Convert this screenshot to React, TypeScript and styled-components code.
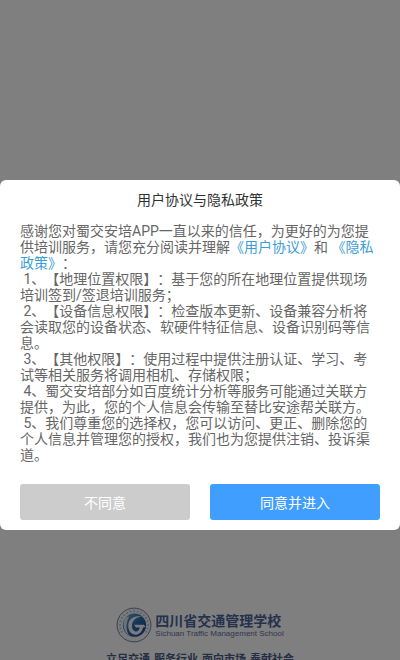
import React from "react";
import styled, { createGlobalStyle } from "styled-components";

const GlobalStyle = createGlobalStyle`
  * { box-sizing: border-box; }
  body {
    margin: 0;
    overflow: hidden;
    background: #fff;
    font-family: Roboto, "Noto Sans CJK SC", sans-serif;
    font-size: 14px;
    text-spacing-trim: space-all;
  }
`;

const Content = styled.main`
  min-height: calc(100vh - 53px);
`;

const Footer = styled.footer`
  display: flex;
  flex-direction: column;
  align-items: center;
  gap: 9px;
`;

const Brand = styled.div`
  display: flex;
  align-items: center;
  gap: 3px;
`;

const BrandText = styled.div`
  display: flex;
  flex-direction: column;
  white-space: nowrap;
`;

const SchoolName = styled.span`
  font-size: 14px;
  line-height: 18px;
  font-weight: 700;
  color: #4a649c;
`;

const SchoolLatin = styled.span`
  font-family: "Liberation Sans", sans-serif;
  font-size: 8px;
  line-height: 8px;
  color: #5c70a4;
`;

const Slogan = styled.p`
  display: flex;
  gap: 4px;
  margin: 0;
  font-size: 11px;
  line-height: 16px;
  font-weight: 700;
  color: #4a5c88;
  white-space: nowrap;
`;

const Overlay = styled.div`
  position: fixed;
  inset: 0;
  display: flex;
  flex-direction: column;
  justify-content: flex-end;
  padding-bottom: 130px;
  background: rgba(0, 0, 0, 0.5);
`;

const Dialog = styled.section`
  display: flex;
  flex-direction: column;
  padding: 10px 20px;
  border-radius: 6px;
  background: #fff;
`;

const Title = styled.h1`
  margin: 0 0 13px;
  font-size: 14px;
  line-height: 20px;
  font-weight: 400;
  text-align: center;
  color: #303133;
`;

const Paragraph = styled.p`
  margin: 0;
  line-height: 16px;
  color: #666;
  white-space: pre-wrap;
`;

const PolicyLink = styled.a`
  color: #3c9cd6;
  text-decoration: none;
`;

const Actions = styled.div`
  display: grid;
  grid-template-columns: 1fr 1fr;
  gap: 20px;
  margin-top: 21px;
`;

const ActionButton = styled.button<{ $primary?: boolean }>`
  height: 36px;
  padding: 0;
  border: 0;
  border-radius: 3px;
  font: inherit;
  color: #fff;
  background: ${(p) => (p.$primary ? "#409eff" : "#ccc")};
  cursor: pointer;
`;

const CLAUSES = [
  " 1、【地理位置权限】：基于您的所在地理位置提供现场培训签到/签退培训服务；",
  " 2、【设备信息权限】：检查版本更新、设备兼容分析将会读取您的设备状态、软硬件特征信息、设备识别码等信息。",
  " 3、【其他权限】：使用过程中提供注册认证、学习、考试等相关服务将调用相机、存储权限；",
  " 4、蜀交安培部分如百度统计分析等服务可能通过关联方提供，为此，您的个人信息会传输至替比安途帮关联方。",
  " 5、我们尊重您的选择权，您可以访问、更正、删除您的个人信息并管理您的授权，我们也为您提供注销、投诉渠道。",
];

const SLOGANS = ["立足交通", "服务行业", "面向市场", "奉献社会"];

function Emblem() {
  return (
    <svg width="36" height="36" viewBox="0 0 36 36" aria-hidden="true">
      <defs>
        <linearGradient id="sea" x1="0" y1="0" x2="1" y2="1">
          <stop offset="0" stopColor="#6cb0d4" />
          <stop offset="0.5" stopColor="#2a6ca8" />
          <stop offset="1" stopColor="#203c84" />
        </linearGradient>
      </defs>
      <circle cx="18" cy="18" r="16.9" fill="#f4f5f8" stroke="#6c80aa" strokeWidth="1" />
      <path
        d="M6.2 25.5A14 14 0 1 1 30 25.5"
        fill="none"
        stroke="#b4bed2"
        strokeWidth="1.8"
        strokeDasharray="1.6 2"
      />
      <circle cx="18.5" cy="18.2" r="11.6" fill="url(#sea)" />
      <path
        d="M25.4 9.6C18.4 7.8 12.4 12 12.2 18.6C12.2 24.6 16 28.4 20.6 27.8C24.2 27.2 26.2 24.2 27 20.6L29.6 20L27.8 17.8L18 17.8L20 20.4L23.8 20.4C23.2 23 21.8 24.4 20 24.4C17 24.2 15.6 21.4 16 17.8C16.6 13.4 19.8 10.4 25.4 9.6Z"
        fill="#f4f7fb"
      />
      <path d="M9.6 10.4C6.4 15.6 7 24 13 28.6C10 22.8 9.4 16.6 13.2 9.6Z" fill="#dce7f1" />
    </svg>
  );
}

export default function App() {
  return (
    <>
      <GlobalStyle />
      <Content />
      <Footer>
        <Brand>
          <Emblem />
          <BrandText>
            <SchoolName>四川省交通管理学校</SchoolName>
            <SchoolLatin>Sichuan Traffic Management School</SchoolLatin>
          </BrandText>
        </Brand>
        <Slogan>
          {SLOGANS.map((text) => (
            <span key={text}>{text}</span>
          ))}
        </Slogan>
      </Footer>
      <Overlay>
        <Dialog role="dialog" aria-modal="true" aria-labelledby="policy-title">
          <Title id="policy-title">用户协议与隐私政策</Title>
          <Paragraph>
            感谢您对蜀交安培APP一直以来的信任，为更好的为您提供培训服务，请您充分阅读并理解
            <PolicyLink href="#agreement">《用户协议》</PolicyLink>和{" "}
            <PolicyLink href="#privacy">《隐私政策》</PolicyLink>：
          </Paragraph>
          {CLAUSES.map((text) => (
            <Paragraph key={text}>{text}</Paragraph>
          ))}
          <Actions>
            <ActionButton type="button">不同意</ActionButton>
            <ActionButton type="button" $primary>
              同意并进入
            </ActionButton>
          </Actions>
        </Dialog>
      </Overlay>
    </>
  );
}
